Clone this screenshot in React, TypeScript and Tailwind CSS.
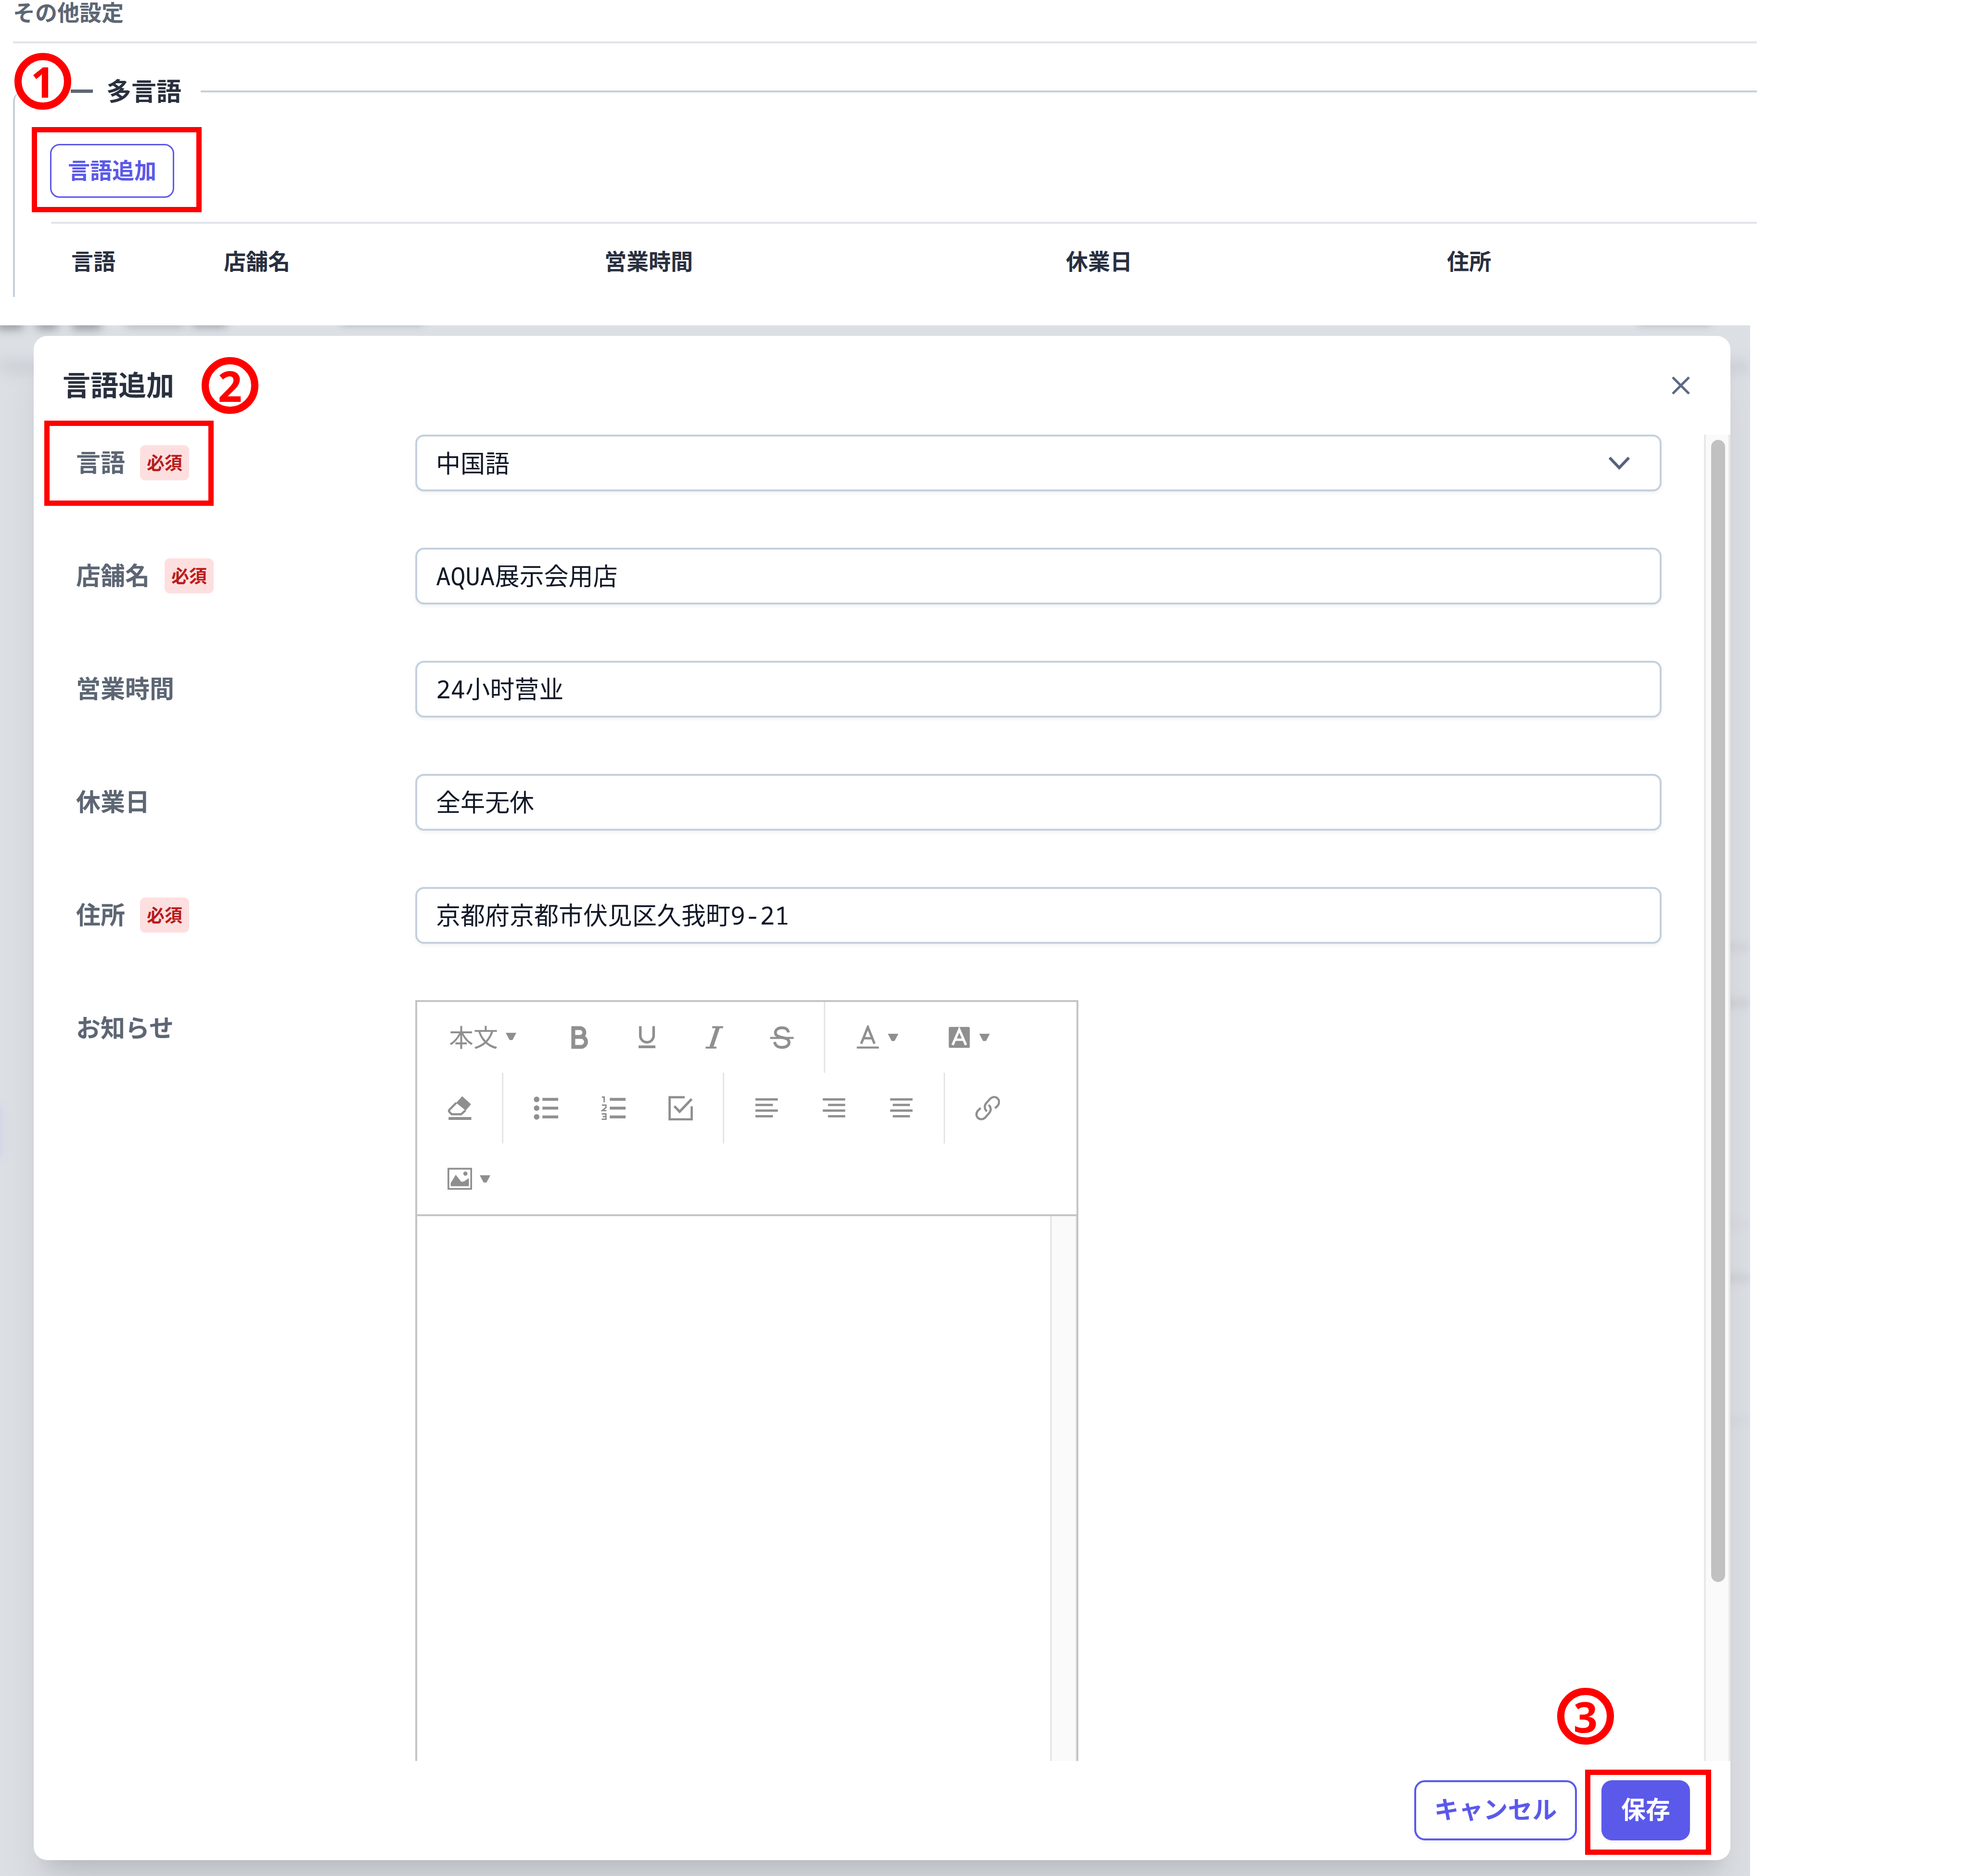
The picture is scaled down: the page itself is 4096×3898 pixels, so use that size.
import React, { useState } from 'react';
import clsx from 'clsx';

type Field = {
  id: string;
  label: string;
  required?: boolean;
  value: string;
};

const fields: Field[] = [
  { id: 'shopName', label: '店舗名', required: true, value: 'AQUA展示会用店' },
  { id: 'hours', label: '営業時間', value: '24小时营业' },
  { id: 'holiday', label: '休業日', value: '全年无休' },
  { id: 'address', label: '住所', required: true, value: '京都府京都市伏见区久我町9-21' },
];

const inputClass =
  'block h-[118px] w-full rounded-[18px] border-4 border-[#c5d0dd] bg-white px-[39px] font-["Noto_Sans_Mono","DejaVu_Sans_Mono","Noto_Sans_CJK_JP",monospace] text-[51px] text-[#111827] shadow-[0_4px_7px_rgba(0,0,0,0.05)]';

function StepNumber({ n, className }: { n: number; className: string }) {
  return (
    <span
      className={clsx(
        'absolute flex size-[118px] items-center justify-center rounded-full border-[15px] border-[#ff0000] font-["Noto_Sans"] text-[88px] leading-none font-bold text-[#ff0000]',
        className
      )}
    >
      {n}
    </span>
  );
}

function RedFrame({ className }: { className: string }) {
  return <span className={clsx('pointer-events-none absolute border-[11px] border-[#ff0000]', className)} />;
}

function RequiredBadge() {
  return (
    <span className="mt-1.5 flex h-[73px] items-center rounded-[11px] bg-[#fedfdf] px-[14px] text-[37px] font-bold text-[#b91c1c]">
      必須
    </span>
  );
}

function FieldLabel({ htmlFor, label, required }: { htmlFor: string; label: string; required?: boolean }) {
  return (
    <label htmlFor={htmlFor} className="flex h-[118px] items-center gap-[31px] pb-2 font-bold text-[#5d6674]">
      {label}
      {required && <RequiredBadge />}
    </label>
  );
}

function Caret() {
  return (
    <svg viewBox="0 0 22 15" className="ml-4 h-[15px] w-[22px]" fill="currentColor">
      <path d="M0 0h22l-8 15h-6z" />
    </svg>
  );
}

function Icon({ children }: { children: React.ReactNode }) {
  return (
    <svg viewBox="0 0 14 14" className="size-[51px] shrink-0" fill="none" stroke="currentColor" strokeWidth="1.2">
      {children}
    </svg>
  );
}

function Tool({ label, children, menu }: { label: string; children: React.ReactNode; menu?: boolean }) {
  return (
    <button
      type="button"
      aria-label={label}
      className={clsx('flex h-[147px] items-center', menu ? 'w-[190px] pl-[45px]' : 'w-[140px] justify-center')}
    >
      {children}
      {menu && <Caret />}
    </button>
  );
}

function Separator() {
  return <span className="mx-[18px] h-[147px] w-[3px] bg-[#e5e5e5]" />;
}

function ListLines() {
  return <path d="M5 2h9M5 7h9M5 12h9" strokeWidth="1.6" />;
}

function EditorToolbar() {
  return (
    <div className="border-b-4 border-[#c5c5c5] px-[18px] text-[#8f8f8f]">
      <div className="flex">
        <button type="button" className="flex h-[147px] w-[249px] items-center pb-1 pl-[48px] text-[51px]">
          本文
          <Caret />
        </button>
        <Tool label="太字">
          <Icon>
            <path d="M3.4 1.7h3.8a2.5 2.5 0 0 1 0 5H3.4zM3.4 6.7h4.4a2.8 2.8 0 0 1 0 5.7H3.4z" strokeWidth="2.2" />
          </Icon>
        </Tool>
        <Tool label="下線">
          <Icon>
            <path d="M3.2 .6v5.400a3.8 3.8 0 0 0 7.600 0V.6" strokeWidth="1.5" />
            <path d="M2.2 12.4h9.6" strokeWidth="1.6" />
          </Icon>
        </Tool>
        <Tool label="斜体">
          <Icon>
            <path d="M5.8 1.2h6.2M2 12.8h6.2" strokeWidth="1.1" />
            <path d="M9 1.4 5.2 12.8" strokeWidth="2.2" />
          </Icon>
        </Tool>
        <Tool label="取り消し線">
          <Icon>
            <path
              d="M10.8 4.2C10.6 2.4 9.2 1.5 7.2 1.5 5 1.5 3.4 2.6 3.4 4.3c0 3.8 7.8 1.6 7.8 5.6 0 1.7-1.7 2.8-4 2.8-2.4 0-4-1.1-4.2-3.1"
              strokeWidth="1.6"
            />
            <path d="M.4 7.3h13.4" />
          </Icon>
        </Tool>
        <Separator />
        <Tool label="文字色" menu>
          <Icon>
            <path d="M3.2 10.6 7 1.2l3.8 9.4M4.5 7.5h5" strokeWidth="1.4" />
            <path d="M.7 12.8h12.6" />
          </Icon>
        </Tool>
        <Tool label="背景色" menu>
          <Icon>
            <rect x="1" y="1" width="12" height="12" rx=".7" fill="currentColor" stroke="none" />
            <path d="M3.2 11.3 7 2.6l3.8 8.7M4.6 8.3h4.8" stroke="#fff" strokeWidth="1.4" />
          </Icon>
        </Tool>
      </div>
      <div className="flex">
        <Tool label="書式をクリア">
          <Icon>
            <path d="M8.4.2 13.4 4.8 10.4 8.4 4.9 4z" fill="currentColor" stroke="none" />
            <path d="M5 4 1.2 7.8c-.5.5-.5 1 0 1.5l1.2 1.2h5.4l2.4-2.2" />
            <path d="M.6 12.9h13" strokeWidth="1.6" />
          </Icon>
        </Tool>
        <Separator />
        <Tool label="箇条書き">
          <Icon>
            <ListLines />
            <g fill="currentColor" stroke="none">
              <circle cx="1.7" cy="2" r="1.6" />
              <circle cx="1.7" cy="7" r="1.6" />
              <circle cx="1.7" cy="12" r="1.6" />
            </g>
          </Icon>
        </Tool>
        <Tool label="番号付きリスト">
          <Icon>
            <ListLines />
            <path d="M.5.7h1.3v3M.5 5.3h2.3v1.4L.7 8.4h2.4M.4 10.3h2.4v3H.4M1 11.8h1.8" strokeWidth=".8" />
          </Icon>
        </Tool>
        <Tool label="チェックリスト">
          <Icon>
            <path d="M9.3 .8H.7v12.6h12.6V6" strokeWidth="1.3" />
            <path d="m3.4 5.9 3 3.1 6.9-7.2" strokeWidth="1.4" />
          </Icon>
        </Tool>
        <Separator />
        <Tool label="左揃え">
          <Icon>
            <path d="M.5 2h12.8M.5 5.2h10M.5 8.4h12.8M.5 11.6h10" strokeWidth="1.3" />
          </Icon>
        </Tool>
        <Tool label="右揃え">
          <Icon>
            <path d="M.5 2h12.8M3.5 5.2h9.8M.5 8.4h12.8M3.5 11.6h9.8" strokeWidth="1.3" />
          </Icon>
        </Tool>
        <Tool label="中央揃え">
          <Icon>
            <path d="M.5 2h12.8M2 5.2h9.8M.5 8.4h12.8M2 11.6h9.8" strokeWidth="1.3" />
          </Icon>
        </Tool>
        <Separator />
        <Tool label="リンク">
          <Icon>
            <path d="M6.6 8.8C5 7.6 5 5.4 6.3 4l2-2.2C9.6.4 11.4.3 12.6 1.4c1.2 1.1 1.2 2.9.1 4.2l-1.5 1.5" />
            <path d="M7.5 5.2c1.6 1.2 1.6 3.3.3 4.7l-2.1 2.4c-1.2 1.3-3.1 1.4-4.2.3C.3 11.5.3 9.7 1.5 8.4L3 6.9" />
          </Icon>
        </Tool>
      </div>
      <div className="flex">
        <Tool label="画像" menu>
          <Icon>
            <path d="M.5 1.2h13v11.5H.5z" strokeWidth="1" />
            <path d="M1.8 11.2V9.4l2.9-4.7 3.2 4 1.6-.3 2.7-1.9v4.7z" fill="currentColor" stroke="none" />
            <circle cx="10.2" cy="4" r="1.2" fill="currentColor" stroke="none" />
          </Icon>
        </Tool>
      </div>
    </div>
  );
}

function SettingsSection() {
  const headings = [
    { text: '言語', width: 'w-[317px]' },
    { text: '店舗名', width: 'w-[791px]' },
    { text: '営業時間', width: 'w-[959px]' },
    { text: '休業日', width: 'w-[792px]' },
    { text: '住所', width: '' },
  ];

  return (
    <section className="relative mr-[445px] h-[676px] pl-[27px] text-[46px]">
      <h2 className="h-[86px] leading-[46px] font-bold text-[#5d6674]">その他設定</h2>
      <hr className="border-t-4 border-[#e2e4ea]" />

      <div className="mt-[74px] flex h-[51px] items-center">
        <span className="ml-[120px] h-[7px] w-[46px] bg-[#5d6674]" />
        <h3 className="ml-7 pb-1.5 text-[52px] leading-[51px] font-bold text-[#29303f]">多言語</h3>
        <span className="ml-10 h-1 grow bg-[#c5d0dd]" />
      </div>

      <div className="-mt-[23px] h-[425px] rounded-tl-[18px] border-l-4 border-[#c5d0dd] pt-[107px] pl-[75px]">
        <button
          type="button"
          className="-ml-[2px] block h-[112px] w-[258px] rounded-[20px] border-[3px] border-[#5b59ea] pb-2 font-bold text-[#5b59ea]"
        >
          言語追加
        </button>
        <table className="mt-[50px] w-full table-fixed border-t-4 border-[#e2e4ea]">
          <thead>
            <tr className="h-[158px]">
              {headings.map((h) => (
                <th key={h.text} className={clsx('pb-1.5 pl-[42px] text-left font-bold text-[#29303f]', h.width)}>
                  {h.text}
                </th>
              ))}
            </tr>
          </thead>
        </table>
      </div>

      <StepNumber n={1} className="top-[110px] left-[30px]" />
      <RedFrame className="top-[264px] left-[66px] h-[177px] w-[353px]" />
    </section>
  );
}

// What shows through of the page behind the dialog
function BlurredPage() {
  return (
    <div aria-hidden="true" className="absolute inset-0">
      <div className="absolute inset-x-0 top-[74px] h-6 bg-[#cbced4] blur-[14px]" />
      <div className="absolute top-[1288px] right-0 h-2 w-60 bg-[#c8cbd1] blur-[9px]" />
      <div className="absolute top-[1402px] right-0 h-3 w-60 bg-[#c8cbd1] blur-[9px]" />
      <div className="absolute top-[1866px] right-0 h-1 w-60 bg-[#c8cbd1] blur-[9px]" />
      <div className="absolute top-[1974px] right-0 h-3 w-60 bg-[#c8cbd1] blur-[9px]" />
      <div className="absolute top-[2276px] right-0 h-1 w-60 bg-[#c8cbd1] blur-[9px]" />
      <div className="absolute top-[1620px] -left-4 h-[110px] w-4 bg-[#c9cbe8] blur-[10px]" />
      <div className="absolute -top-4 -left-2 h-6 w-[56px] bg-[#92959a] blur-[10px]" />
      <div className="absolute -top-4 left-[76px] h-6 w-11 bg-[#92959a] blur-[10px]" />
      <div className="absolute -top-4 left-[150px] h-6 w-[60px] bg-[#92959a] blur-[10px]" />
      <div className="absolute -top-4 left-[262px] h-5 w-[120px] bg-[#b4b7bc] blur-[9px]" />
      <div className="absolute -top-4 left-[400px] h-5 w-[70px] bg-[#9fa2a7] blur-[9px]" />
      <div className="absolute -top-4 left-[710px] h-4 w-[170px] bg-[#aeb6bf] blur-[8px]" />
      <div className="absolute -top-4 right-[82px] h-4 w-[150px] bg-[#b4b7bc] blur-[8px]" />
    </div>
  );
}

function LanguageDialog() {
  const [values, setValues] = useState<Record<string, string>>(
    Object.fromEntries(fields.map((f) => [f.id, f.value]))
  );

  return (
    <div className="relative mr-[41px] ml-[70px] rounded-[28px] bg-white text-[51px] shadow-[0_73px_92px_-18px_rgba(0,0,0,0.1),0_29px_37px_-22px_rgba(0,0,0,0.1)]">
      <div className="flex h-[205px] items-center justify-between pr-[84px] pl-[60px]">
        <h2 className="pb-1.5 text-[58px] font-bold text-[#29303f]">言語追加</h2>
        <button type="button" aria-label="閉じる" className="text-[#5b6983]">
          <svg viewBox="0 0 38 38" className="size-[38px]" stroke="currentColor" strokeWidth="5">
            <path d="M2 2l34 34M36 2 2 36" />
          </svg>
        </button>
      </div>

      <div className="flex h-[2756px] justify-between overflow-hidden">
        <div className="mr-[88px] ml-[88px] grid grow grid-cols-[705px_1fr] content-start gap-y-[117px]">
          <FieldLabel htmlFor="language" label="言語" required />
          <div className="relative">
            <select id="language" className={clsx(inputClass, 'appearance-none')} defaultValue="zh">
              <option value="zh">中国語</option>
              <option value="en">英語</option>
            </select>
            <svg
              viewBox="0 0 46 32"
              className="pointer-events-none absolute top-11 right-[65px] h-8 w-[46px] text-[#55627a]"
              fill="none"
              stroke="currentColor"
              strokeWidth="6"
            >
              <path d="M3 4l20 21L43 4" />
            </svg>
          </div>

          {fields.map((field) => (
            <React.Fragment key={field.id}>
              <FieldLabel htmlFor={field.id} label={field.label} required={field.required} />
              <input
                id={field.id}
                type="text"
                className={clsx(inputClass, 'pb-1.5')}
                value={values[field.id]}
                onChange={(e) => setValues({ ...values, [field.id]: e.target.value })}
              />
            </React.Fragment>
          ))}

          <FieldLabel htmlFor="notice" label="お知らせ" />
          <div className="w-[1378px] border-4 border-[#c5c5c5]">
            <EditorToolbar />
            <div className="flex h-[1400px]">
              <textarea id="notice" className="grow resize-none" />
              <span className="w-[55px] border-r-2 border-l-4 border-[#e8e8e8] bg-[#fafafa]" />
            </div>
          </div>
        </div>

        {/* Scrollbar */}
        <div className="w-[55px] shrink-0 border-r-4 border-l-4 border-[#e8e8e8] bg-[#fafafa] pt-[11px]">
          <div className="ml-[11px] h-[2373px] w-[29px] rounded-full bg-[#c1c1c1]" />
        </div>
      </div>

      <div className="flex h-[206px] gap-[51px] pt-10 pr-[84px] font-bold">
        <button
          type="button"
          className="ml-auto h-[125px] w-[338px] rounded-[22px] border-4 border-[#5b59ea] pb-2 text-[#5b59ea] shadow-[0_4px_7px_rgba(0,0,0,0.05)]"
        >
          キャンセル
        </button>
        <button
          type="button"
          className="h-[125px] w-[184px] rounded-[22px] bg-[#5b59ea] pb-2 text-white shadow-[0_4px_7px_rgba(0,0,0,0.05)]"
        >
          保存
        </button>
      </div>

      <StepNumber n={2} className="top-11 left-[349px]" />
      <RedFrame className="top-[176px] left-[22px] h-[177px] w-[352px]" />
      <StepNumber n={3} className="right-[242px] bottom-[240px]" />
      <RedFrame className="right-10 bottom-[11px] h-[177px] w-[262px]" />
    </div>
  );
}

function App() {
  return (
    <div className='min-h-screen bg-white font-["Noto_Sans_CJK_JP",sans-serif]'>
      <SettingsSection />
      <main className="relative mr-[459px] overflow-hidden bg-[#dce0e5] pt-[22px] pb-[33px]">
        <BlurredPage />
        <LanguageDialog />
      </main>
    </div>
  );
}

export default App;
